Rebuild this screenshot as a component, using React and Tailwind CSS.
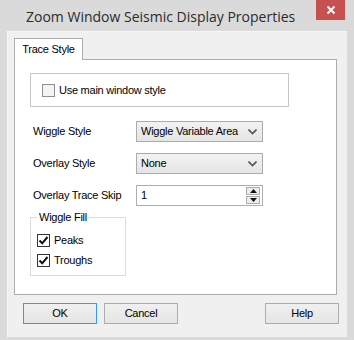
const FONT = { fontFamily: '"Liberation Sans", Arial, sans-serif' };

function CheckBox({ checked, label }) {
  return (
    <label className="flex items-center gap-[4px] text-[11px] leading-[13px] text-black">
      <span
        className={`flex h-[13px] w-[13px] items-center justify-center border ${
          checked ? "border-[#333333] bg-white" : "border-[#8f8f8f] bg-[#f4f4f4]"
        }`}
      >
        {checked && (
          <svg width="11" height="11" viewBox="0 0 11 11">
            <path d="M1.5 5.5 L4.2 8.3 L9.5 2" fill="none" stroke="#111" strokeWidth="2" />
          </svg>
        )}
      </span>
      {label}
    </label>
  );
}

function Select({ value }) {
  return (
    <div className="flex h-[21px] w-[127px] items-center justify-between border border-[#acacac] bg-gradient-to-b from-[#f2f2f2] to-[#e5e5e5] pl-[4px] pr-[5px] text-[11px] text-black">
      <span>{value}</span>
      <svg width="9" height="6" viewBox="0 0 9 6">
        <path d="M0.5 0.5 L4.5 4.5 L8.5 0.5" fill="none" stroke="#555" strokeWidth="1.6" />
      </svg>
    </div>
  );
}

function Spin({ value }) {
  return (
    <div className="flex h-[21px] w-[127px] items-center justify-between border border-[#abadb3] bg-white pl-[4px] pr-[2px] text-[11px] text-black">
      <span>{value}</span>
      <div className="flex flex-col gap-[1px]">
        <div className="flex h-[8px] w-[14px] items-center justify-center border border-[#acacac] bg-[#ececec]">
          <svg width="7" height="4" viewBox="0 0 7 4">
            <path d="M0 4 L3.5 0 L7 4 Z" fill="#111" />
          </svg>
        </div>
        <div className="flex h-[8px] w-[14px] items-center justify-center border border-[#acacac] bg-[#ececec]">
          <svg width="7" height="4" viewBox="0 0 7 4">
            <path d="M0 0 L3.5 4 L7 0 Z" fill="#111" />
          </svg>
        </div>
      </div>
    </div>
  );
}

function Row({ label, children, top }) {
  return (
    <div className={`flex items-center ${top}`}>
      <span className="w-[103px] text-[11px] text-black">{label}</span>
      {children}
    </div>
  );
}

function Button({ children, primary, width = "w-[74px]" }) {
  return (
    <button
      className={`flex h-[21px] ${width} items-center justify-center border bg-gradient-to-b from-[#f0f0f0] to-[#e5e5e5] text-[11px] text-black ${
        primary ? "border-[#3399ff]" : "border-[#acacac]"
      }`}
    >
      {children}
    </button>
  );
}

export default function App() {
  return (
    <div className="flex h-[340px] w-[354px] flex-col bg-[#dadada] px-[7px] pb-[3px] tracking-[-0.25px]" style={FONT}>
      <div className="flex h-[31px] items-start">
        <div
          className="ml-[19px] mt-[6px] text-[14px] tracking-normal text-[#2b2b2b]"
          style={{ fontFamily: '"Open Sans", "Liberation Sans", sans-serif' }}
        >
          Zoom Window Seismic Display Properties
        </div>
        <div className="ml-auto mr-[2px] flex h-[20px] w-[29px] items-center justify-center bg-[#c75050]">
          <svg width="10" height="10" viewBox="0 0 10 10">
            <path d="M1.5 1.5 L8.5 8.5 M8.5 1.5 L1.5 8.5" stroke="#fff" strokeWidth="2" />
          </svg>
        </div>
      </div>

      <div className="flex flex-1 flex-col border-l border-t border-[#f7f7f7] bg-[#f0f0f0] pl-[6px] pr-[10px] pt-[6px]">
        <div className="flex">
          <div className="z-10 -mb-px flex h-[22px] w-[69px] items-center justify-center border border-b-0 border-[#adadad] bg-white text-[11px] text-black">
            Trace Style
          </div>
        </div>
        <div className="flex h-[236px] flex-col border border-[#adadad] bg-white pl-[15px]">
          <div className="mt-[13px] flex h-[34px] w-[259px] items-center border border-[#c6c6c6] pl-[11px]">
            <CheckBox label="Use main window style" />
          </div>

          <div className="flex flex-col pl-[3px]">
            <Row label="Wiggle Style" top="mt-[14px]">
              <Select value="Wiggle Variable Area" />
            </Row>
            <Row label="Overlay Style" top="mt-[11px]">
              <Select value="None" />
            </Row>
            <Row label="Overlay Trace Skip" top="mt-[11px]">
              <Spin value="1" />
            </Row>
          </div>

          <div className="relative mt-[11px] flex h-[59px] w-[96px] flex-col gap-[7px] border border-[#dcdcdc] pl-[6px] pt-[16px]">
            <span className="absolute -top-[7px] left-[6px] bg-white px-[2px] text-[11px] leading-[13px] text-black">
              Wiggle Fill
            </span>
            <CheckBox checked label="Peaks" />
            <CheckBox checked label="Troughs" />
          </div>
        </div>

        <div className="mt-[8px] flex items-center pl-[9px]">
          <Button primary>OK</Button>
          <div className="ml-[7px]">
            <Button>Cancel</Button>
          </div>
          <div className="ml-auto -mr-[2px]">
            <Button>Help</Button>
          </div>
        </div>
      </div>
    </div>
  );
}
